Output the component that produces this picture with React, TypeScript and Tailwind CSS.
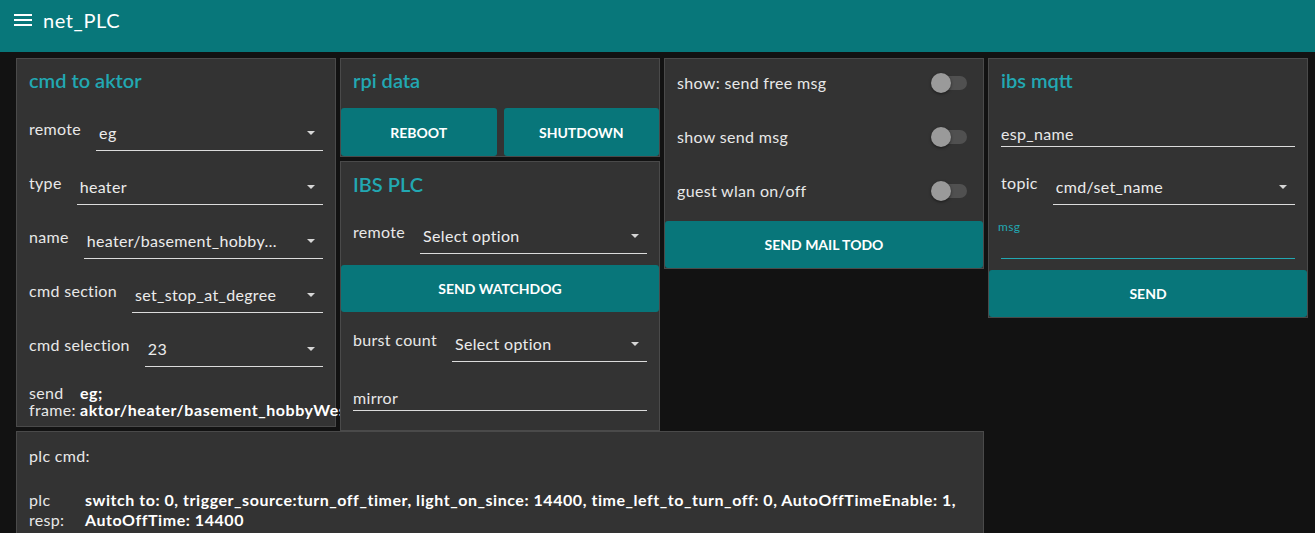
import React from "react";

const Arrow = () => (
  <svg width="8" height="4" viewBox="0 0 8 4" className="shrink-0">
    <path d="M0 0h8L4 4z" fill="#d6d6d6" />
  </svg>
);

const Select = ({ value }: { value: string }) => (
  <div className="flex-1 min-w-0 h-[40px] flex items-center pt-[4px] pl-[3px] pr-[8px] border-b border-[#dcdcdc]">
    <span className="flex-1 truncate text-[#ececec]">{value}</span>
    <Arrow />
  </div>
);

const Row = ({ label, value, mt }: { label: string; value: string; mt: string }) => (
  <div className={`flex items-start gap-[15px] ${mt}`}>
    <span className="mt-[6px] leading-6 whitespace-nowrap">{label}</span>
    <Select value={value} />
  </div>
);

const Title = ({ children }: { children: React.ReactNode }) => (
  <div className="text-[20px] leading-6 font-semibold tracking-normal text-[#22a8b2]">{children}</div>
);

const Btn = ({ children, className }: { children: React.ReactNode; className?: string }) => (
  <button className={`bg-[#08767a] rounded-[3px] text-white text-[14px] font-bold tracking-normal uppercase flex items-center justify-center ${className ?? ""}`}>
    {children}
  </button>
);

const Toggle = () => (
  <div className="relative w-[36px] h-[20px] flex items-center">
    <div className="ml-[2px] w-[34px] h-[14px] rounded-full bg-[#505050]" />
    <div className="absolute left-0 top-0 w-[20px] h-[20px] rounded-full bg-[#9a9a9a] shadow-[0_1px_3px_rgba(0,0,0,0.5)]" />
  </div>
);

const card = "relative bg-[#333333] border border-[#4a4a4a] w-[320px]";

export default function App() {
  return (
    <div className="min-h-screen bg-[#121212] text-[#e8e8e8] text-[16px] tracking-[0.02em] font-['Lato',sans-serif]">
      <header className="h-[52px] bg-[#08777a] flex items-start pt-[8px] pl-[11px]">
        <svg width="24" height="24" viewBox="0 0 24 24">
          <path d="M3 18h18v-2H3v2zm0-5h18v-2H3v2zm0-7v2h18V6H3z" fill="#ffffff" />
        </svg>
        <span className="ml-[8px] text-[20px] leading-6 tracking-[0.03em] text-white">net_PLC</span>
      </header>
      <main className="pl-4 pt-[6px]">
        <div className="flex items-start gap-1">
          {/* cmd to aktor */}
          <div className={`${card} h-[369px] px-3 pt-[9px]`}>
            <Title>cmd to aktor</Title>
            <Row label="remote" value="eg" mt="mt-[19px]" />
            <Row label="type" value="heater" mt="mt-[14px]" />
            <Row label="name" value="heater/basement_hobby…" mt="mt-[14px]" />
            <Row label="cmd section" value="set_stop_at_degree" mt="mt-[14px]" />
            <Row label="cmd selection" value="23" mt="mt-[14px]" />
            <div className="flex mt-[17px] leading-[17px]">
              <div className="w-[51px] shrink-0">send frame:</div>
              <div className="flex-1 min-w-0 font-bold tracking-[0.034em] text-white">
                eg; aktor/heater/basement_hobbyWest/set_stop_at_degree/23
              </div>
            </div>
          </div>

          {/* column 2 */}
          <div className="flex flex-col gap-1 w-[320px]">
            <div className={card}>
              <div className="px-3 pt-[9px] pb-[16px]">
                <Title>rpi data</Title>
              </div>
              <div className="flex gap-[7px]">
                <Btn className="flex-1 h-[48px]">Reboot</Btn>
                <Btn className="flex-1 h-[48px]">Shutdown</Btn>
              </div>
            </div>
            <div className={`${card} pb-[19px]`}>
              <div className="px-3 pt-[10px]">
                <Title>IBS PLC</Title>
                <Row label="remote" value="Select option" mt="mt-[18px]" />
              </div>
              <Btn className="w-full h-[47px] mt-[11px]">Send watchdog</Btn>
              <div className="px-3">
                <Row label="burst count" value="Select option" mt="mt-[10px]" />
                <div className="mt-[24px] leading-6 border-b border-[#dcdcdc]">mirror</div>
              </div>
            </div>
          </div>

          {/* column 3 */}
          <div className={card}>
            <div className="flex flex-col gap-[6px]">
              {["show: send free msg", "show send msg", "guest wlan on/off"].map((t) => (
                <div key={t} className="h-[48px] flex items-center justify-between pl-3 pr-[16px]">
                  <span>{t}</span>
                  <Toggle />
                </div>
              ))}
            </div>
            <Btn className="w-full h-[47px] mt-[6px]">Send mail todo</Btn>
          </div>

          {/* column 4 */}
          <div className={card}>
            <div className="px-3 pt-[9px]">
              <Title>ibs mqtt</Title>
              <div className="mt-[30px] leading-6 border-b border-[#dcdcdc]">esp_name</div>
              <Row label="topic" value="cmd/set_name" mt="mt-[18px]" />
              <div className="mt-[14px]">
                <div className="-ml-[3px] text-[12px] leading-4 text-[#22a8b2]">msg</div>
                <div className="h-[24px] border-b border-[#22a8b2]" />
              </div>
            </div>
            <Btn className="w-full h-[47px] mt-[11px]">Send</Btn>
          </div>
        </div>

        {/* plc cmd */}
        <div className="relative bg-[#333333] border border-[#4a4a4a] w-[968px] px-3 pt-[12px] pb-[24px]">
          <div className="leading-6">plc cmd:</div>
          <div className="flex mt-[22px] leading-5">
            <div className="w-[56px] shrink-0">plc resp:</div>
            <div className="flex-1 font-bold tracking-[0.034em] text-white">
              switch to: 0, trigger_source:turn_off_timer, light_on_since: 14400, time_left_to_turn_off: 0, AutoOffTimeEnable: 1, AutoOffTime: 14400
            </div>
          </div>
        </div>
      </main>
    </div>
  );
}
